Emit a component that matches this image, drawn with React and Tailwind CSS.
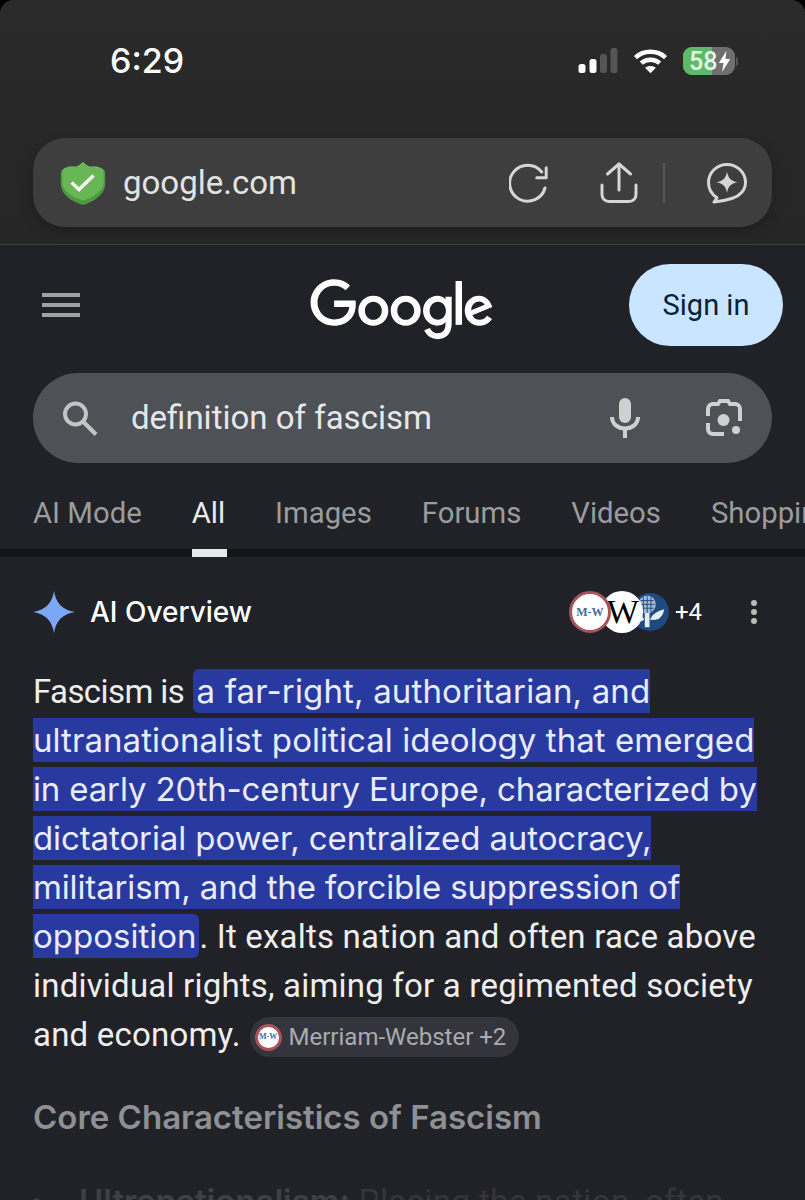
import React from "react";

const font = { fontFamily: "Roboto, sans-serif" };
const inter = { fontFamily: "Inter, sans-serif" };

function Signal() {
  return (
    <svg width="40" height="26" viewBox="0 0 40 26" className="block">
      <rect x="0.500" y="16" width="7" height="9" rx="2.500" fill="#fff" />
      <rect x="11.500" y="11" width="7" height="14" rx="2.500" fill="#fff" />
      <rect x="22" y="6" width="7" height="19" rx="2.500" fill="#555" />
      <rect x="32.500" y="0" width="7" height="25" rx="2.500" fill="#555" />
    </svg>
  );
}

function Wifi() {
  return (
    <svg width="35" height="26" viewBox="0 0 36 26" className="block">
      <g fill="none" stroke="#fff" strokeWidth="4.600">
        <path d="M2.500 9.500C11 1.600 25 1.600 33.500 9.500" />
        <path d="M8.500 15.200c5.400-4.600 13.600-4.600 19 0" />
      </g>
      <path d="M12.500 20c3.200-2.600 7.800-2.600 11 0L18 25.500z" fill="#fff" />
    </svg>
  );
}

function Battery() {
  return (
    <div className="flex items-center gap-[1px]">
      <div className="relative flex h-[28px] w-[52px] items-center overflow-hidden rounded-[9px] bg-[#6f6f6f]">
        <div className="h-full w-[29px] shrink-0 bg-[#5cbc66]" />
        <div className="absolute inset-0 flex items-center pl-[6px] text-[25px] font-medium leading-none text-[#e9f6ea]" style={font}>
          58
          <svg width="13" height="21" viewBox="0 0 13 22" className="ml-[1px]">
            <path d="M8.500 0 0.500 12.500H5.500L4 22 12.500 8.500H7.500z" fill="#fff" />
          </svg>
        </div>
      </div>
      <div className="h-[9px] w-[2px] rounded-r-full bg-[#555]" />
    </div>
  );
}

function Shield() {
  return (
    <svg width="46" height="44" viewBox="0 0 46 44" className="block shrink-0">
      <path
        d="M23 1c3.500 3.600 6.500 5.200 10 4.600 3-.5 5.600.2 8.600 1.600 2.400 1.100 3.600 2.600 3.600 5.400v10.200C45.200 33 35 40.500 23 44 11 40.500.8 33 .8 22.800V12.600C.8 9.800 2 8.300 4.400 7.200 7.400 5.800 10 5.100 13 5.600 16.500 6.200 19.500 4.600 23 1z"
        fill="#4c9a3f"
      />
      <path
        d="M23 1c3.500 3.600 6.500 5.200 10 4.600 3-.5 5.600.2 8.600 1.600 1.500.7 2 2 2 4.400v9.600C43.600 30 33.500 36.500 23 39.500 12.500 36.500 2.400 30 2.400 21.200v-9.600c0-2.400.5-3.700 2-4.400C7.400 5.800 10 5.100 13 5.600 16.500 6.200 19.500 4.600 23 1z"
        fill="#68b655"
      />
      <path d="M11.500 21.500 19 28.500 33.500 14.500" fill="none" stroke="#f3f8ef" strokeWidth="3.600" />
    </svg>
  );
}

function Reload() {
  return (
    <svg width="40" height="40" viewBox="0 0 40 40" className="block" fill="none" stroke="#d6d6d6" strokeWidth="3" strokeLinecap="round" strokeLinejoin="round">
      <path d="M32.700 9A18 18 0 1 0 36 25" />
      <path d="M37.200 4.700V14.700H27.700" />
    </svg>
  );
}

function Share() {
  return (
    <svg width="38" height="42" viewBox="0 0 38 42" className="block" fill="none" stroke="#d6d6d6" strokeWidth="3" strokeLinecap="round" strokeLinejoin="round">
      <path d="M19 2v26" />
      <path d="M7.500 12 19 2l11.500 10" />
      <path d="M2 23v9.500c0 4 3 7 7 7h20c4 0 7-3 7-7V23" />
    </svg>
  );
}

function Spark() {
  return (
    <svg width="42" height="42" viewBox="0 0 42 42" className="block">
      <path
        d="M21 2.500C10.800 2.500 2.500 10.500 2.500 20.500c0 6.500 3.500 12 8.500 15.300l-3 4.200c7-.6 13-2 18.500-3.800C34 33.800 39.500 28 39.500 20.500 39.500 10.500 31.200 2.500 21 2.500z"
        fill="none"
        stroke="#d6d6d6"
        strokeWidth="3"
        strokeLinejoin="round"
      />
      <path d="M21 9.500c1 6.500 4 9.700 10.500 10.800C25 21.400 22 24.600 21 31c-1-6.400-4-9.600-10.500-10.700C17 19.200 20 16 21 9.500z" fill="#d6d6d6" />
    </svg>
  );
}

function Hamburger() {
  return (
    <div className="flex w-[38px] flex-col gap-[6px]">
      <div className="h-[4px] bg-[#a0a1a3]" />
      <div className="h-[4px] bg-[#a0a1a3]" />
      <div className="h-[4px] bg-[#a0a1a3]" />
    </div>
  );
}

function GoogleLogo() {
  return (
    <svg width="184" height="62" viewBox="0 0 272 92" fill="#fff" role="img" aria-label="Google" className="block">
      <path d="M115.750 47.180c0 12.770-9.990 22.180-22.250 22.180s-22.250-9.410-22.250-22.180C71.250 34.320 81.240 25 93.500 25s22.250 9.320 22.250 22.180zm-9.740 0c0-7.980-5.790-13.440-12.510-13.440S80.990 39.200 80.990 47.180c0 7.900 5.790 13.440 12.510 13.440s12.510-5.550 12.510-13.440z" />
      <path d="M163.750 47.180c0 12.770-9.990 22.180-22.250 22.180s-22.250-9.410-22.250-22.180c0-12.850 9.990-22.180 22.250-22.180s22.250 9.320 22.250 22.180zm-9.740 0c0-7.980-5.790-13.440-12.510-13.440s-12.510 5.460-12.510 13.440c0 7.900 5.790 13.440 12.510 13.440s12.510-5.550 12.510-13.440z" />
      <path d="M209.750 26.340v39.820c0 16.380-9.660 23.070-21.080 23.070-10.750 0-17.220-7.190-19.660-13.070l8.480-3.530c1.510 3.610 5.210 7.870 11.170 7.870 7.310 0 11.840-4.510 11.840-13v-3.190h-.34c-2.180 2.690-6.380 5.040-11.680 5.040-11.090 0-21.250-9.660-21.250-22.090 0-12.520 10.160-22.260 21.250-22.260 5.290 0 9.490 2.350 11.680 4.960h.34v-3.610h9.250zm-8.560 20.920c0-7.810-5.210-13.520-11.840-13.520-6.720 0-12.350 5.710-12.350 13.520 0 7.730 5.630 13.360 12.350 13.360 6.630 0 11.840-5.630 11.840-13.360z" />
      <path d="M225 3v65h-9.500V3h9.500z" />
      <path d="M262.020 54.480l7.560 5.040c-2.440 3.610-8.320 9.830-18.480 9.830-12.600 0-22.010-9.740-22.010-22.180 0-13.190 9.490-22.180 20.920-22.180 11.510 0 17.140 9.160 18.980 14.110l1.010 2.520-29.650 12.280c2.270 4.450 5.800 6.720 10.750 6.720 4.960 0 8.400-2.440 10.920-6.140zm-23.270-7.980l19.820-8.230c-1.090-2.770-4.370-4.700-8.230-4.700-4.950 0-11.840 4.370-11.590 12.930z" />
      <path d="M35.290 41.410V32H67c.31 1.640.47 3.580.47 5.680 0 7.060-1.930 15.790-8.150 22.010-6.050 6.300-13.780 9.660-24.020 9.660C16.320 69.350.36 53.890.36 34.910.36 15.930 16.320.47 35.300.47c10.500 0 17.980 4.120 23.600 9.490l-6.640 6.640c-4.030-3.780-9.490-6.720-16.970-6.720-13.860 0-24.700 11.170-24.700 25.030 0 13.860 10.840 25.030 24.700 25.030 8.990 0 14.110-3.610 17.390-6.890 2.660-2.660 4.410-6.460 5.100-11.650l-22.490.01z" />
    </svg>
  );
}

function SearchIcon() {
  return (
    <svg width="36" height="37" viewBox="0 0 36 36" className="block" fill="none" stroke="#c4c5c7" strokeWidth="4">
      <circle cx="13.500" cy="13.500" r="10.500" />
      <path d="M21 21 34 34" />
    </svg>
  );
}

function MicIcon() {
  return (
    <svg width="30" height="40" viewBox="0 0 30 40" className="block">
      <rect x="9" y="0" width="12" height="25" rx="6" fill="#cfd0d1" />
      <path d="M2 19c0 7 6 11.500 13 11.500S28 26 28 19" fill="none" stroke="#cfd0d1" strokeWidth="4" />
      <rect x="13" y="30" width="4" height="10" fill="#cfd0d1" />
    </svg>
  );
}

function LensIcon() {
  return (
    <svg width="38" height="38" viewBox="0 0 38 38" className="block">
      <g fill="none" stroke="#cfd0d1" strokeWidth="4">
        <path d="M3 17V10a5 5 0 0 1 5-5h5l2-3h8l2 3h5a5 5 0 0 1 5 5v12" />
        <path d="M3 24v6a5 5 0 0 0 5 5h11" />
      </g>
      <circle cx="18.500" cy="21" r="6" fill="#cfd0d1" />
      <circle cx="31" cy="31" r="4" fill="#cfd0d1" />
    </svg>
  );
}

function Sparkle() {
  return (
    <svg width="42" height="44" viewBox="0 0 44 44" className="block shrink-0">
      <path d="M22 0c2 12.500 8.500 19.800 22 22-13.500 2.200-20 9.500-22 22-2-12.500-8.500-19.800-22-22C13.500 19.800 20 12.500 22 0z" fill="#7ba7f5" />
    </svg>
  );
}

function MwBadge({ size, textSize }) {
  return (
    <div
      className="relative z-20 flex shrink-0 items-center justify-center rounded-full border-[3px] border-[#a8525a] bg-white font-bold leading-none text-[#3e6aa5]"
      style={{ width: size, height: size, fontSize: textSize, fontFamily: '"Liberation Serif", serif' }}
    >
      M-W
    </div>
  );
}

function WikiBadge() {
  return (
    <div
      className="relative z-10 ml-[-10px] flex h-[42px] w-[42px] shrink-0 items-center justify-center overflow-hidden rounded-full bg-white pl-[2px] text-[34px] leading-none text-black"
      style={{ fontFamily: '"Liberation Serif", serif' }}
    >
      W
    </div>
  );
}

function ThistleBadge() {
  return (
    <svg width="38" height="42" viewBox="0 0 40 42" className="ml-[-12px] block shrink-0">
      <circle cx="20" cy="21" r="20" fill="#1f4a7f" />
      <ellipse cx="17" cy="13" rx="9" ry="9.500" fill="#a9bdd6" />
      <path d="M10 9h14M9 13h16M10 17h14M13 5v16M17 4v18M21 5v16" stroke="#1f4a7f" strokeWidth="1" />
      <path d="M14.500 22h5v15h-5z" fill="#e4ecf4" />
      <path d="M20 29c3-7 8-9 15-11-1 7-6 13-15 11z" fill="#e4ecf4" />
      <path d="M7 23c3 1 6 3 7 6l-3 2c-2-2-4-5-4-8z" fill="#e4ecf4" />
    </svg>
  );
}

function Tab({ active, children }) {
  return (
    <div className={active ? "text-[#ececec]" : "text-[#9b9c9f]"}>{children}</div>
  );
}

export default function App() {
  return (
    <div className="h-[1200px] w-full overflow-hidden bg-black" style={font}>
      <div className="overflow-hidden rounded-t-[14px] bg-[#212227]">
        <header className="h-[245px] border-b border-[#3e3e44] bg-gradient-to-b from-[#2a2a2a] to-[#262626] px-[33px] pt-[38px]">
          <div className="flex h-[46px] items-center justify-between pl-[77px] pr-[34px]">
            <div className="text-[34px] font-medium leading-none text-white" style={inter}>6:29</div>
            <div className="flex items-center gap-[15px]">
              <Signal />
              <Wifi />
              <Battery />
            </div>
          </div>
          <div className="mt-[54px] flex h-[89px] items-center rounded-[32px] bg-[#3e3e3e] pl-[27px] pr-[24px] shadow-[0_4px_14px_rgba(0,0,0,0.25)]">
            <Shield />
            <div className="ml-[17px] text-[33px] leading-none text-[#e3e3e3]">google.com</div>
            <div className="ml-auto flex items-center">
              <Reload />
              <div className="ml-[51px]"><Share /></div>
              <div className="ml-[25px] h-[40px] w-[2px] bg-[#585858]" />
              <div className="ml-[41px]"><Spark /></div>
            </div>
          </div>
        </header>

        <div className="relative flex h-[128px] items-center pb-[8px] pl-[42px] pr-[22px]">
          <Hamburger />
          <div className="absolute left-[310px] top-[34px]"><GoogleLogo /></div>
          <div className="ml-auto flex h-[82px] w-[154px] items-center justify-center rounded-[41px] bg-[#c9e5ff] text-[29px] font-normal leading-none text-[#0a1f38]">
            Sign in
          </div>
        </div>

        <div className="mx-[33px] flex h-[90px] items-center rounded-[45px] bg-[#4e5155] pl-[29px] pr-[29px]">
          <SearchIcon />
          <div className="mb-[2px] ml-[33px] text-[33px] leading-none text-[#e6e7e8]">definition of fascism</div>
          <div className="ml-auto flex items-center gap-[65px]">
            <MicIcon />
            <LensIcon />
          </div>
        </div>

        <nav className="mt-[29px] flex h-[57px] gap-[50px] overflow-hidden whitespace-nowrap pl-[33px] text-[29.300px] leading-[42px]">
          <Tab>AI Mode</Tab>
          <Tab active>All</Tab>
          <Tab>Images</Tab>
          <Tab>Forums</Tab>
          <Tab>Videos</Tab>
          <Tab>Shopping</Tab>
        </nav>
        <div className="h-[8px] bg-[#141518] pl-[192px]">
          <div className="h-[8px] w-[35px] bg-[#e8e8e8]" />
        </div>

        <main className="h-[643px] overflow-hidden px-[33px]">
          <div className="flex h-[110px] items-center">
            <Sparkle />
            <div className="ml-[15px] text-[28px] font-medium leading-none text-white" style={inter}>AI Overview</div>
            <div className="ml-auto flex items-center">
              <MwBadge size={42} textSize={12} />
              <WikiBadge />
              <ThistleBadge />
              <div className="ml-[6px] text-[24px] leading-none text-white">+4</div>
              <div className="ml-[49px] mr-[15px] flex flex-col gap-[3px]">
                <div className="h-[6px] w-[6px] rounded-full bg-[#bdbdbd]" />
                <div className="h-[6px] w-[6px] rounded-full bg-[#bdbdbd]" />
                <div className="h-[6px] w-[6px] rounded-full bg-[#bdbdbd]" />
              </div>
            </div>
          </div>

          <p className="text-[33px] leading-[49px] tracking-[0.2px] text-[#eeeeee]">
            <span className="tracking-[-0.600px]">Fascism is</span>{" "}
            <span className="rounded-[6px] bg-[#283a9f] py-[2px] pl-[4px] pr-[3px] tracking-normal text-[#e9ecff]" style={inter}>
              <span className="tracking-[0.150px]">a far-right, authoritarian, and</span><br />
              <span className="tracking-[0.060px]">ultranationalist political ideology that emerged</span><br />
              <span className="tracking-[-0.150px]">in early 20th-century Europe, characterized by</span><br />
              <span className="tracking-[-0.100px]">dictatorial power, centralized autocracy,</span><br />
              <span className="tracking-[-0.140px]">militarism, and the forcible suppression of</span><br />
              opposition
            </span>
            . It exalts nation and often race above<br />
            individual rights, aiming for a regimented society<br />
            and economy.
            <span className="ml-[9px] inline-flex h-[40px] items-center rounded-[20px] bg-[#34353c] pl-[5px] pr-[13px] align-middle text-[24px] leading-none tracking-normal text-[#a9abb1]">
              <MwBadge size={27} textSize={8} />
              <span className="ml-[7px]">Merriam-Webster +2</span>
            </span>
          </p>

          <h2 className="mt-[36px] text-[33px] font-semibold leading-[44px] text-[#8f9094]" style={inter}>Core Characteristics of Fascism</h2>

          <div className="mt-[38px] flex text-[33px] leading-[49px] text-[#35363a]">
            <div className="mt-[21px] h-[7px] w-[7px] shrink-0 rounded-full bg-[#3c3d41]" />
            <div className="ml-[39px] whitespace-nowrap tracking-[0.4px]"><span className="font-semibold tracking-normal text-[#3f4044]" style={inter}>Ultranationalism:</span> Placing the nation, often</div>
          </div>
        </main>
      </div>
    </div>
  );
}
